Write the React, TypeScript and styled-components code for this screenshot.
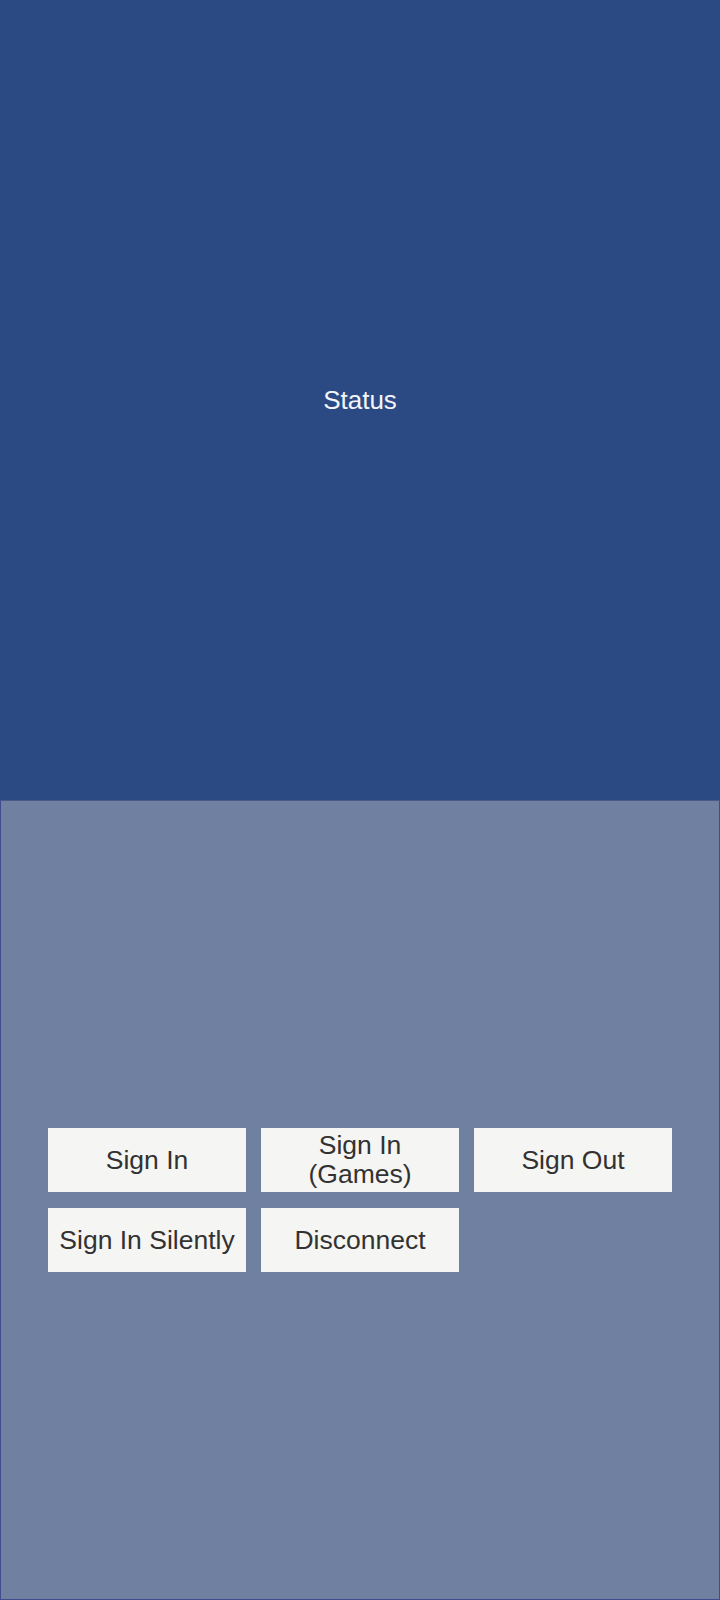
import React from 'react';
import styled, { createGlobalStyle } from 'styled-components';

const GlobalStyle = createGlobalStyle`
  html, body {
    margin: 0;
    padding: 0;
    background: #2b4a84;
  }

  body {
    font-family: 'Liberation Sans', Arial, sans-serif;
  }
`;

const Screen = styled.div`
  display: flex;
  flex-direction: column;
  width: 720px;
  height: 1600px;
  overflow: hidden;
`;

const StatusArea = styled.div`
  display: flex;
  align-items: center;
  justify-content: center;
  height: 800px;
  background-color: #2b4a84;
`;

const StatusText = styled.div`
  font-size: 26px;
  line-height: 30px;
  color: #f2f4f8;
`;

const ControlPanel = styled.div`
  box-sizing: border-box;
  flex: 1;
  padding: 327px 0 0 47px;
  background-color: #7080a0;
  border: 1px solid #3e4d8e;
  border-top-color: #4a5a8a;
`;

const ButtonGrid = styled.div`
  display: grid;
  grid-template-columns: repeat(3, 198px);
  grid-auto-rows: 64px;
  column-gap: 15px;
  row-gap: 16px;
`;

const ActionButton = styled.button`
  display: flex;
  align-items: center;
  justify-content: center;
  padding: 0 4px;
  border: none;
  border-radius: 0;
  background-color: #f5f5f3;
  color: #323232;
  font-family: 'Liberation Sans', Arial, sans-serif;
  font-size: 26.5px;
  line-height: 29px;
  text-align: center;
  cursor: pointer;
`;

const buttons = [
  'Sign In',
  'Sign In (Games)',
  'Sign Out',
  'Sign In Silently',
  'Disconnect',
];

function App() {
  return (
    <>
      <GlobalStyle />
      <Screen>
        <StatusArea>
          <StatusText>Status</StatusText>
        </StatusArea>
        <ControlPanel>
          <ButtonGrid>
            {buttons.map((label) => (
              <ActionButton key={label}>
                {label === 'Sign In (Games)' ? (
                  <span>
                    Sign In
                    <br />
                    (Games)
                  </span>
                ) : (
                  label
                )}
              </ActionButton>
            ))}
          </ButtonGrid>
        </ControlPanel>
      </Screen>
    </>
  );
}

export default App;
